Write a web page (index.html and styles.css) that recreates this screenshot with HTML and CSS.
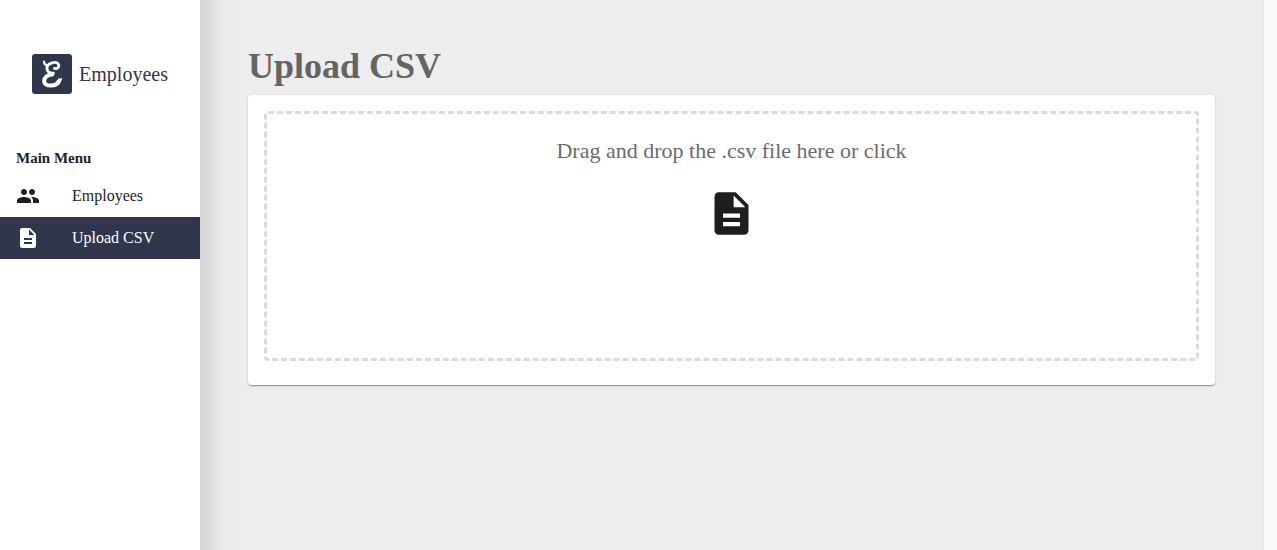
FILE: index.html
```html
<!DOCTYPE html>
<html lang="en">
<head>
<meta charset="utf-8">
<title>Upload CSV</title>
<link rel="stylesheet" href="styles.css">
</head>
<body>
<div class="app">
  <aside class="sidebar">
    <a class="brand" href="#">
      <svg class="brand-logo" viewBox="0 0 40 40" aria-hidden="true">
        <rect width="40" height="40" rx="3" fill="#30364b"/>
        <g fill="none" stroke="#fff" stroke-linecap="round" stroke-linejoin="round">
          <path stroke-width="2.200" d="M12 7.600C12 9.800 13.400 11.200 15.600 11.400"/>
          <path stroke-width="2.800" d="M22.400 14.400C25 15.400 27.400 13.400 26.800 10.800C26.200 8.400 22.800 8 20 8.800C16.600 9.800 14.600 12.200 15 15C15.400 17.800 18.200 19.400 21.400 19.200"/>
          <path stroke-width="4" d="M20.400 20.400C15.200 20.800 12.200 23.600 12.200 27C12.200 30.400 15.200 31.800 19 31.600C23.200 31.400 26.200 29.400 27.400 26.600"/>
          <path stroke-width="2.200" d="M25.600 27.400L29 25.200"/>
        </g>
      </svg>
      <span>Employees</span>
    </a>
    <h2 class="menu-title">Main Menu</h2>
    <nav class="menu">
      <a class="menu-item" href="#">
        <svg class="icon" viewBox="0 0 24 24" aria-hidden="true"><path d="M16 11c1.66 0 2.99-1.34 2.99-3S17.66 5 16 5s-3 1.34-3 3 1.34 3 3 3zm-8 0c1.66 0 2.99-1.34 2.99-3S9.66 5 8 5 5 6.34 5 8s1.34 3 3 3zm0 2c-2.33 0-7 1.17-7 3.500V19h14v-2.500C15 14.170 10.330 13 8 13zm8 0c-.29 0-.62.02-.97.05 1.160.840 1.970 1.970 1.970 3.450V19h6v-2.500c0-2.330-4.670-3.500-7-3.500z"/></svg>
        <span>Employees</span>
      </a>
      <a class="menu-item active" href="#" aria-current="page">
        <svg class="icon" viewBox="0 0 24 24" aria-hidden="true"><path d="M14 2H6c-1.100 0-1.990.900-1.990 2L4 20c0 1.100.890 2 1.990 2H18c1.100 0 2-.900 2-2V8l-6-6zm2 16H8v-2h8v2zm0-4H8v-2h8v2zm-3-5V3.500L18.500 9H13z"/></svg>
        <span>Upload CSV</span>
      </a>
    </nav>
  </aside>
  <main class="content">
    <h1 class="title">Upload CSV</h1>
    <section class="card">
      <label class="dropzone">
        <input class="file-input" type="file" accept=".csv">
        <span class="drop-text">Drag and drop the .csv file here or click</span>
        <svg class="drop-icon" viewBox="0 0 24 24" aria-hidden="true"><path d="M14 2H6c-1.100 0-1.990.900-1.990 2L4 20c0 1.100.890 2 1.990 2H18c1.100 0 2-.900 2-2V8l-6-6zm2 16H8v-2h8v2zm0-4H8v-2h8v2zm-3-5V3.500L18.500 9H13z"/></svg>
      </label>
    </section>
  </main>
  <div class="scroll-track"></div>
</div>
</body>
</html>
```
FILE: styles.css
```css
* { box-sizing: border-box; }
body {
  margin: 0;
  background: #ededed;
  color: #1e1e1e;
  font-family: "Liberation Serif", "Times New Roman", serif;
  font-size: 16px;
}
.app { display: flex; min-height: 100vh; overflow: hidden; }
.sidebar {
  flex: 0 0 200px;
  background: #fff;
}
.brand {
  display: flex;
  align-items: center;
  justify-content: center;
  gap: 7px;
  padding: 54px 0 56px;
  color: #30364b;
  font-size: 20px;
  text-decoration: none;
}
.brand-logo { width: 40px; height: 40px; }
.menu-title {
  margin: 0;
  padding: 0 16px 9px;
  font-size: 15px;
  line-height: 16px;
}
.menu { display: flex; flex-direction: column; }
.menu-item {
  display: flex;
  align-items: center;
  gap: 32px;
  height: 42px;
  padding: 0 16px;
  color: #1e1e1e;
  text-decoration: none;
}
.menu-item.active { background: #30364b; color: #fff; }
.icon { width: 24px; height: 24px; fill: currentColor; }
.content {
  flex: 1;
  padding: 45px 48px 48px;
  background: linear-gradient(to right, #d4d4d4, #dbdbdb 8px, #e4e4e4 16px, #eaeaea 26px, #ededed 40px);
}
.title {
  margin: 0 0 7px;
  color: #646464;
  font-size: 36px;
  line-height: 43px;
}
.card {
  padding: 16px 16px 24px;
  background: #fff;
  border-radius: 4px;
  box-shadow: 0 2px 1px -1px rgba(0,0,0,.2), 0 1px 1px rgba(0,0,0,.14), 0 1px 3px rgba(0,0,0,.12);
}
.dropzone {
  display: flex;
  flex-direction: column;
  align-items: center;
  gap: 24px;
  position: relative;
  min-height: 250px;
  padding-top: 23px;
  border: 3px dashed #dbdbdb;
  border-radius: 4px;
  cursor: pointer;
}
.file-input {
  position: absolute;
  inset: 0;
  width: 100%;
  height: 100%;
  opacity: 0;
  cursor: pointer;
}
.drop-text { color: #6b6b6b; font-size: 22px; line-height: 27px; }
.drop-icon { width: 51px; height: 51px; fill: #1e1e1e; }
.scroll-track { flex: 0 0 14px; background: #fafafa; border-left: 1px solid #e5e5e5; }
```
